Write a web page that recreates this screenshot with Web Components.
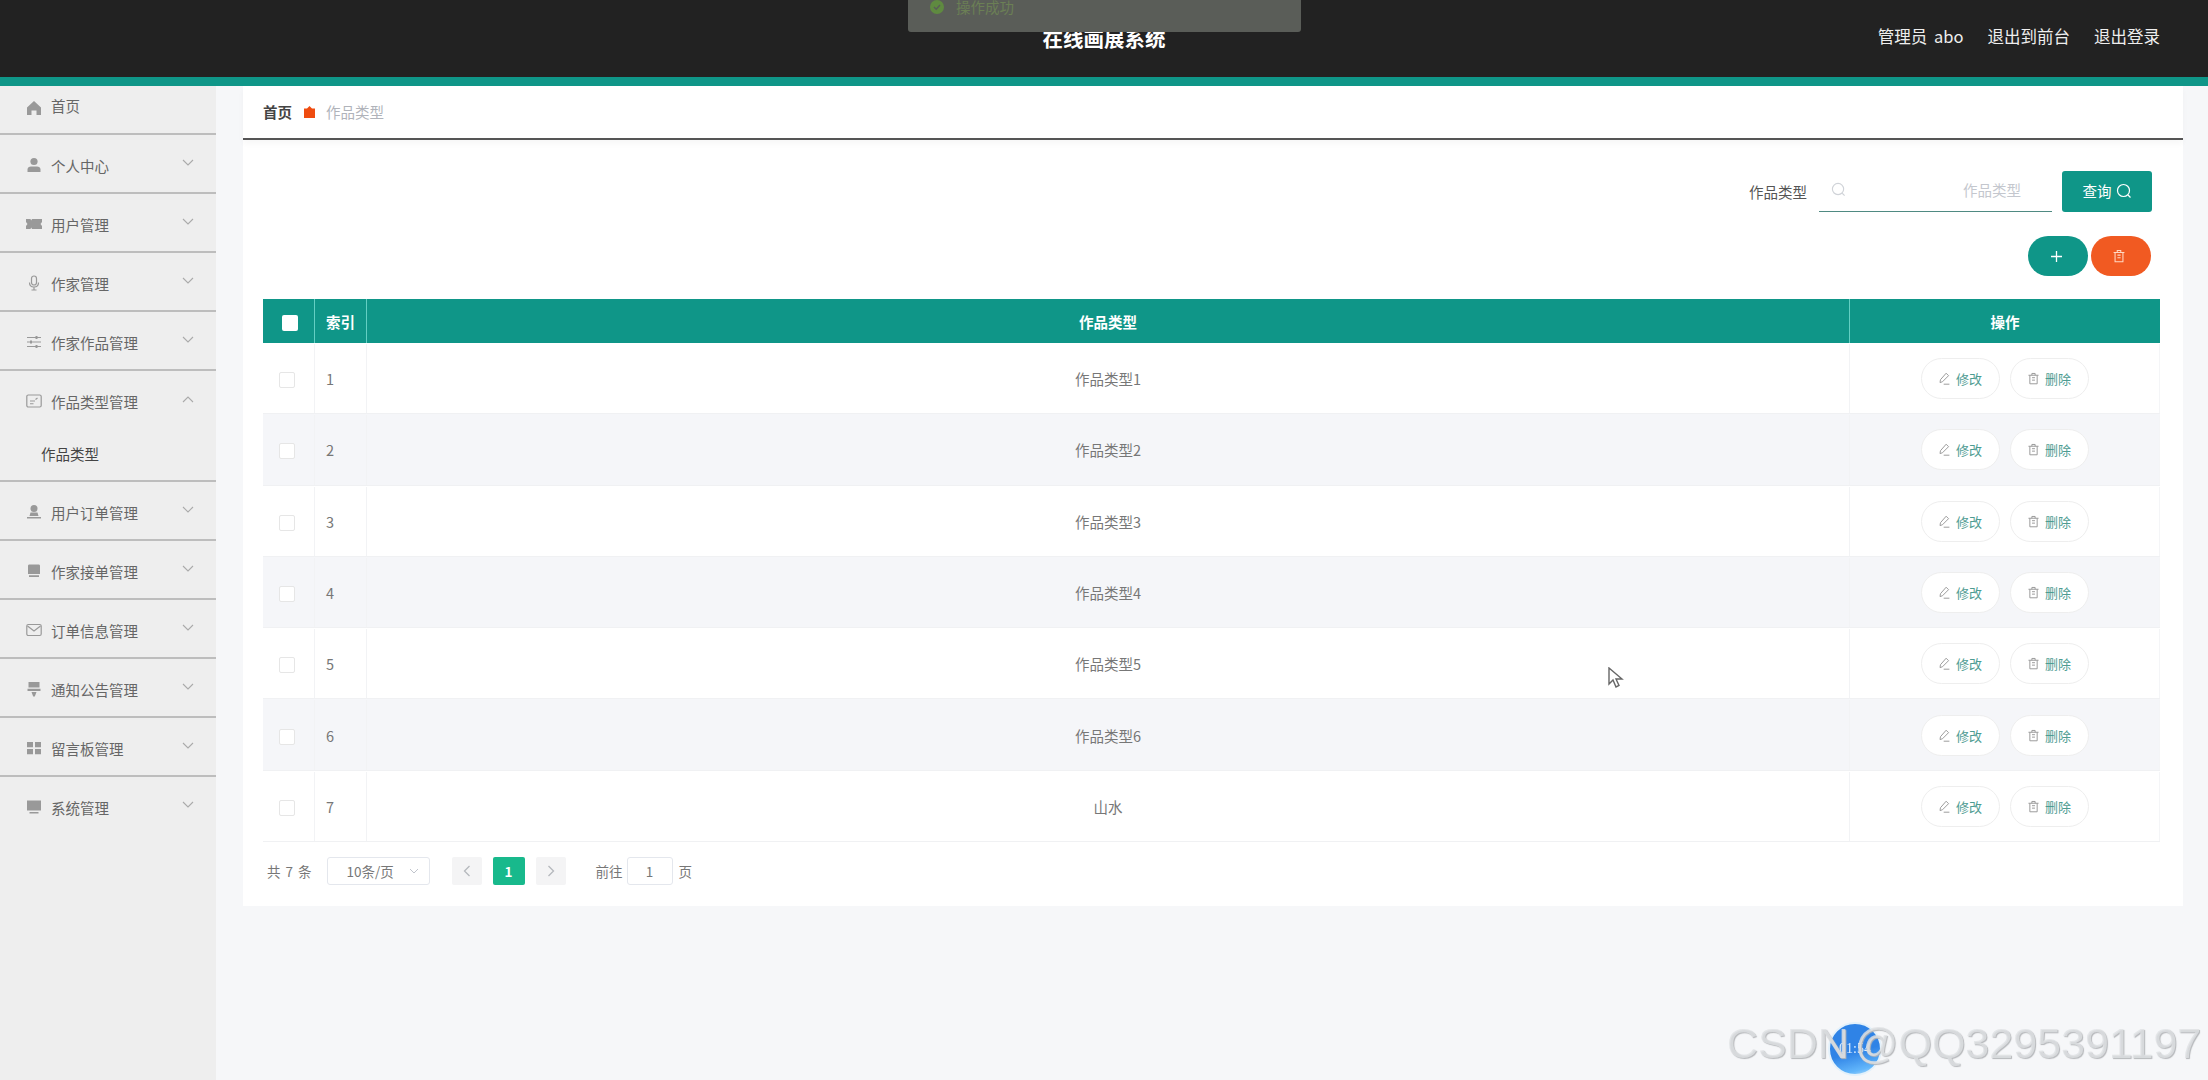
<!DOCTYPE html>
<html lang="zh">
<head>
<meta charset="utf-8">
<title>在线画展系统</title>
<style>
  html, body { margin: 0; height: 100%; overflow: hidden; background: #f6f7f9; }
  body { font-family: "Noto Sans CJK SC", "Noto Sans", sans-serif; }
  .page { display: flex; height: 994px; }
</style>
</head>
<body>
<app-header title="在线画展系统">
  <span>管理员 abo</span><span>退出到前台</span><span>退出登录</span>
</app-header>
<div class="page">
  <side-menu>
    <menu-item label="首页" icon="home" first></menu-item>
    <menu-item label="个人中心" icon="user" arrow></menu-item>
    <menu-item label="用户管理" icon="ticket" arrow></menu-item>
    <menu-item label="作家管理" icon="mic" arrow></menu-item>
    <menu-item label="作家作品管理" icon="sliders" arrow></menu-item>
    <menu-item label="作品类型管理" icon="card" arrow open>作品类型</menu-item>
    <menu-item label="用户订单管理" icon="custom" arrow></menu-item>
    <menu-item label="作家接单管理" icon="order" arrow></menu-item>
    <menu-item label="订单信息管理" icon="mail" arrow></menu-item>
    <menu-item label="通知公告管理" icon="flag" arrow></menu-item>
    <menu-item label="留言板管理" icon="grid" arrow></menu-item>
    <menu-item label="系统管理" icon="screen" arrow last></menu-item>
  </side-menu>
  <main-panel>
    <bread-crumb home="首页" current="作品类型"></bread-crumb>
    <search-bar label="作品类型" placeholder="作品类型"></search-bar>
    <action-bar></action-bar>
    <data-table></data-table>
    <page-bar></page-bar>
  </main-panel>
</div>
<screen-overlay></screen-overlay>

<script>
const ICONS = {
  home: '<path fill="currentColor" d="M8 1 1 7.5V15h4.500v-4.500h5V15H15V7.500z"/>',
  user: '<circle fill="currentColor" cx="8" cy="4.500" r="3.600"/><path fill="currentColor" d="M1.500 15v-2.500C1.500 10.500 3 9.500 5 9.500h6c2 0 3.500 1 3.500 3V15z"/>',
  ticket: '<path fill="currentColor" d="M0 3h4.500l.7 1.500.8-1.500H16v3l-1.500 2 1.500 2v3H6l-.8-1.500-.7 1.500H0v-3l1.500-2L0 6z"/>',
  mic: '<rect x="5.500" y="1" width="5" height="9" rx="2.500" fill="none" stroke="currentColor" stroke-width="1.200"/><path fill="none" stroke="currentColor" stroke-width="1.200" d="M3.500 7.500c0 6 9 6 9 0M8 12.500V15M5.500 15h5"/>',
  sliders: '<path fill="none" stroke="currentColor" stroke-width="1.200" d="M1 3.500h14M1 8h14M1 12.500h14"/><path fill="currentColor" d="M9.500 2h2v3h-2zM4 6.500h2v3H4zM9.500 11h2v3h-2z"/>',
  card: '<rect x=".8" y="2" width="14.400" height="12" rx="1.500" fill="none" stroke="currentColor" stroke-width="1.200"/><path fill="none" stroke="currentColor" stroke-width="1.100" d="M4 8h5M4 10.800h3.500M9.500 6.500l2-1.500"/>',
  custom: '<circle fill="currentColor" cx="8" cy="4.500" r="3.500"/><path fill="currentColor" d="M4.500 8.500h7l1 3.500h-9zM1 13h14v1.500H1z"/>',
  order: '<path fill="currentColor" d="M3.500 1.500h9c1 0 1.500.5 1.500 1.500v8H2V3c0-1 .5-1.500 1.500-1.500zM3 12.200h10V14H3z"/>',
  mail: '<rect x=".8" y="2.500" width="14.400" height="11" rx="1.500" fill="none" stroke="currentColor" stroke-width="1.200"/><path fill="none" stroke="currentColor" stroke-width="1.200" d="m1.500 4 6.500 5 6.500-5"/>',
  flag: '<path fill="currentColor" d="M2.500 1h11v5.500h-11zM1.500 7.700h13V10h-13zM5.500 11h5L8.800 15.500H7.200z"/>',
  grid: '<path fill="currentColor" d="M1 2h6v5.300H1zM9 2h6v5.300H9zM1 9h6v5.300H1zM9 9h6v5.300H9z"/>',
  screen: '<path fill="currentColor" d="M1 1.500h14V11.500H1zM3.500 13h9v1.500h-9z"/>',
  search: '<circle cx="7.500" cy="7.500" r="6" fill="none" stroke="currentColor" stroke-width="1.200"/><path stroke="currentColor" stroke-width="1.200" d="m12 12 2.500 2.500"/>',
  trash: '<path fill="none" stroke="currentColor" stroke-width="1.200" d="M3.500 4v10.500h9V4M1.800 4h12.400M6 4V1.800h4V4M6.200 7h3.600M6.200 10h3.600"/>',
  pencil: '<path fill="none" stroke="currentColor" stroke-width="1.200" d="M10 1.500 13 4.500 5.500 12 2.500 13 3 9.500z M7 15h7"/>'
};
const svg = (name, size) => `<svg width="${size}" height="${size}" viewBox="0 0 16 16" aria-hidden="true">${ICONS[name]}</svg>`;

class AppHeader extends HTMLElement {
  constructor() {
    super();
    this.attachShadow({ mode: "open" }).innerHTML = `
      <style>
        :host {
          display: grid;
          grid-template-columns: 1fr auto 1fr;
          align-items: center;
          height: 77px;
          background: #222;
          border-bottom: 9px solid #0f9688;
          color: #fff;
        }
        h1 { grid-column: 2; margin: 0 0 1px; font-size: 20.500px; font-weight: 700; }
        nav { grid-column: 3; justify-self: end; display: flex; gap: 24px; margin-bottom: 6px; padding-right: 48px; font-size: 16.500px; color: #eee; word-spacing: 3px; }
      </style>
      <h1>${this.getAttribute("title")}</h1>
      <nav><slot></slot></nav>`;
  }
}
customElements.define("app-header", AppHeader);

class SideMenu extends HTMLElement {
  constructor() {
    super();
    this.attachShadow({ mode: "open" }).innerHTML = `
      <style>
        :host { display: block; flex: 0 0 216px; background: #eee; height: 100%; }
      </style>
      <slot></slot>`;
  }
}
customElements.define("side-menu", SideMenu);

class MenuItem extends HTMLElement {
  constructor() {
    super();
    const open = this.hasAttribute("open");
    const arrow = this.hasAttribute("arrow")
      ? `<svg class="arrow" width="14" height="8" viewBox="0 0 14 8"><path fill="none" stroke="#aaa" stroke-width="1.100" d="${open ? "M2 7l5-5 5 5" : "M2 1l5 5 5-5"}"/></svg>`
      : "";
    this.attachShadow({ mode: "open" }).innerHTML = `
      <style>
        :host { display: block; font-size: 14.500px; color: #666; border-bottom: 2px solid #bdbdbd; }
        :host([first]) .row { height: 47px; padding-top: 0; padding-bottom: 9px; }
        :host([first]) .ic { margin-top: 6px; }
        :host([last]) { border-bottom: 0; }
        .row { display: flex; align-items: center; height: 57px; box-sizing: border-box; padding: 3px 21px 0 26px; }
        .ic { display: flex; width: 16px; margin-right: 9px; color: #999; }
        .label { flex: 1; }
        .arrow { margin-top: -5px; }
        .sub { height: 52px; line-height: 51px; padding-left: 41px; color: #444; }
      </style>
      <div class="row"><span class="ic">${svg(this.getAttribute("icon"), 16)}</span><span class="label">${this.getAttribute("label")}</span>${arrow}</div>
      ${open ? '<div class="sub"><slot></slot></div>' : ""}`;
  }
}
customElements.define("menu-item", MenuItem);

class MainPanel extends HTMLElement {
  constructor() {
    super();
    this.attachShadow({ mode: "open" }).innerHTML = `
      <style>
        :host { display: block; flex: 1; margin: 0 25px 0 27px; }
        .card { background: #fff; height: 820px; box-sizing: border-box; padding: 0 23px 0 20px; }
      </style>
      <div class="card"><slot></slot></div>`;
  }
}
customElements.define("main-panel", MainPanel);

class BreadCrumb extends HTMLElement {
  constructor() {
    super();
    this.attachShadow({ mode: "open" }).innerHTML = `
      <style>
        :host {
          display: flex;
          align-items: center;
          height: 54px;
          box-sizing: border-box;
          margin: 0 -23px 0 -20px;
          padding: 0 0 1px 20px;
          border-bottom: 2px solid #555;
          box-shadow: 0 4px 6px rgba(0, 0, 0, .03);
          font-size: 14.500px;
        }
        b { color: #444; font-weight: 700; }
        svg { margin: 0 11px 0 12px; }
        span { color: #b0b3ba; }
      </style>
      <b>${this.getAttribute("home")}</b>
      <svg width="11" height="12" viewBox="0 0 11 12"><path fill="#ef4c10" d="M5.500 0 8 2.500h3V12H0V2.500h3z"/></svg>
      <span>${this.getAttribute("current")}</span>`;
  }
}
customElements.define("bread-crumb", BreadCrumb);

class SearchBar extends HTMLElement {
  constructor() {
    super();
    this.attachShadow({ mode: "open" }).innerHTML = `
      <style>
        :host { display: flex; justify-content: flex-end; align-items: center; height: 41px; margin-top: 31px; padding-right: 8px; font-size: 14.500px; color: #555; }
        .label { margin-right: 12px; }
        .input { display: flex; align-items: center; width: 233px; height: 41px; box-sizing: border-box; border-bottom: 1px solid #4f8a82; padding: 0 31px 4px 12px; color: #c4c7ce; }
        .ph { margin-left: auto; }
        .input svg { color: #d0d3d8; }
        button { display: flex; align-items: center; justify-content: center; gap: 4px; width: 90px; height: 41px; margin-left: 10px; border: 0; border-radius: 3px; background: #0f9688; color: #fff; font: inherit; padding: 0 0 2px; }
      </style>
      <span class="label">${this.getAttribute("label")}</span>
      <div class="input">${svg("search", 15)}<span class="ph">${this.getAttribute("placeholder")}</span></div>
      <button>查询${svg("search", 16)}</button>`;
  }
}
customElements.define("search-bar", SearchBar);

class ActionBar extends HTMLElement {
  constructor() {
    super();
    this.attachShadow({ mode: "open" }).innerHTML = `
      <style>
        :host { display: flex; justify-content: flex-end; gap: 3px; margin-top: 24px; padding-right: 9px; }
        button { display: flex; align-items: center; justify-content: center; width: 60px; height: 40px; border: 0; border-radius: 20px; padding: 0 4px 0 0; color: #fff; }
        .add { background: #0f9688; }
        .del { background: #f15a22; color: #ffd9c4; }
      </style>
      <button class="add" aria-label="新增"><svg width="13" height="13" viewBox="0 0 13 13"><path stroke="currentColor" stroke-width="1.300" d="M6.500 1v11M1 6.500h11"/></svg></button>
      <button class="del" aria-label="删除">${svg("trash", 14)}</button>`;
  }
}
customElements.define("action-bar", ActionBar);

class DataTable extends HTMLElement {
  constructor() {
    super();
    const names = ["作品类型1", "作品类型2", "作品类型3", "作品类型4", "作品类型5", "作品类型6", "山水"];
    const rows = names.map((name, i) => `
      <div class="row">
        <div class="c"><i class="box"></i></div>
        <div class="c idx">${i + 1}</div>
        <div class="c">${name}</div>
        <div class="c ops">
          <span class="pill">${svg("pencil", 13)}修改</span>
          <span class="pill">${svg("trash", 13)}删除</span>
        </div>
      </div>`).join("");
    this.attachShadow({ mode: "open" }).innerHTML = `
      <style>
        :host { display: block; margin-top: 23px; font-size: 14.500px; color: #777; }
        .row, .head { display: grid; grid-template-columns: 52px 52px 1fr 310px; }
        .head { height: 44px; background: #0f9688; color: #fff; font-weight: 700; }
        .head .c { border-right: 1px solid #63cfc3; }
        .head .c:last-child { border-right: 0; }
        .head .box { width: 16px; height: 16px; background: #fff; border: 0; border-radius: 2px; margin: 3px 0 0 2px; }
        .row { height: 71.300px; box-sizing: border-box; padding-top: 1px; border-bottom: 1px solid #f0f1f3; }
        .row:nth-child(even) { background: #f5f6f9; }
        .c { display: flex; align-items: center; justify-content: center; border-right: 1px solid #f2f3f5; }
        .c:last-child { border-right: 1px solid #f4f5f7; }
        .box { width: 14px; height: 14px; border: 1px solid #e6e6e6; border-radius: 2px; background: #fff; margin: 3px 0 0 -3px; }
        .idx { justify-content: flex-start; padding-left: 11px; }
        .ops { gap: 10px; }
        .pill { display: flex; align-items: center; justify-content: center; gap: 5px; width: 79px; height: 41px; box-sizing: border-box; border: 1px solid #eeeeee; border-radius: 21px; background: #fff; font-size: 13px; color: #4e9c92; }
        .pill svg { color: #999; }
      </style>
      <div class="head">
        <div class="c"><i class="box"></i></div>
        <div class="c idx">索引</div>
        <div class="c">作品类型</div>
        <div class="c">操作</div>
      </div>
      ${rows}`;
  }
}
customElements.define("data-table", DataTable);

class PageBar extends HTMLElement {
  constructor() {
    super();
    this.attachShadow({ mode: "open" }).innerHTML = `
      <style>
        :host { display: flex; align-items: center; height: 58px; padding: 0 0 0 4px; font-size: 13.500px; color: #777; word-spacing: 2px; }
        .select { display: flex; align-items: center; justify-content: space-between; width: 103px; height: 28px; box-sizing: border-box; margin-left: 15px; padding: 0 10px 0 19px; border: 1px solid #e4e7ed; border-radius: 3px; }
        .btn { display: flex; align-items: center; justify-content: center; width: 30px; height: 28px; border-radius: 2px; background: #f4f4f5; color: #b5b8bd; }
        .prev { margin-left: 22px; }
        .now { margin: 0 11px; background: #18b98c; color: #fff; font-weight: 700; width: 32px; }
        .go { margin-left: 30px; }
        .num { display: flex; align-items: center; justify-content: center; width: 46px; height: 28px; box-sizing: border-box; margin: 0 6px 0 4px; border: 1px solid #e4e7ed; border-radius: 3px; }
      </style>
      <span>共 7 条</span>
      <div class="select"><span>10条/页</span><svg width="10" height="6" viewBox="0 0 10 6"><path fill="none" stroke="#c0c4cc" d="m1 1 4 4 4-4"/></svg></div>
      <div class="btn prev"><svg width="8" height="12" viewBox="0 0 8 12"><path fill="none" stroke="currentColor" stroke-width="1.300" d="M6.500 1 1.500 6l5 5"/></svg></div>
      <div class="btn now">1</div>
      <div class="btn"><svg width="8" height="12" viewBox="0 0 8 12"><path fill="none" stroke="currentColor" stroke-width="1.300" d="m1.500 1 5 5-5 5"/></svg></div>
      <span class="go">前往</span>
      <div class="num">1</div>
      <span>页</span>`;
  }
}
customElements.define("page-bar", PageBar);

// things lying over the page: toast, pointer, recorder badge, watermark
class ScreenOverlay extends HTMLElement {
  constructor() {
    super();
    this.attachShadow({ mode: "open" }).innerHTML = `
      <style>
        :host { position: fixed; inset: 0; display: block; pointer-events: none; }
        .toast { position: absolute; left: 908px; top: 0; width: 393px; height: 32px; box-sizing: border-box; padding-left: 21px; display: flex; align-items: flex-start; gap: 11px; background: #5a5d58; border-radius: 0 0 3px 3px; color: #6b7f55; font-size: 14.500px; line-height: 14px; overflow: hidden; }
        .toast svg { flex: none; }
        .cursor { position: absolute; left: 1608px; top: 667px; }
        .badge { position: absolute; left: 1828px; top: 1022px; width: 54px; height: 54px; box-sizing: border-box; border-radius: 50%; border: 2px solid #e3f1fb; background: linear-gradient(165deg, #2f83e6 0 55%, #62b6fb 85%, #bfe2fa); color: #dbeeff; font: 14px/50px "Liberation Serif", serif; text-align: center; }
        .mark { position: absolute; left: 1727px; top: 1019px; font: 43px/48px "Liberation Sans", sans-serif; word-spacing: -6px; color: rgba(224, 226, 229, .8); text-shadow: 1px 1px 1px #b5b7ba; white-space: nowrap; }
      </style>
      <div class="toast">
        <svg width="16" height="16" viewBox="0 0 16 16"><circle cx="8" cy="7" r="7" fill="#5f8a40"/><path fill="none" stroke="#5a5d58" stroke-width="1.500" d="m5 7 2.200 2.200L11 5"/></svg>
        <span>操作成功</span>
      </div>
      <svg class="cursor" width="17" height="22" viewBox="0 0 17 22"><path fill="#fff" stroke="#666" stroke-width="1.400" d="M1 1v16l4-4 3 7 3-1.500-3-6.500h6z"/></svg>
      <div class="badge">01:54</div>
      <div class="mark">CSDN @QQ3295391197</div>`;
  }
}
customElements.define("screen-overlay", ScreenOverlay);
</script>
</body>
</html>
